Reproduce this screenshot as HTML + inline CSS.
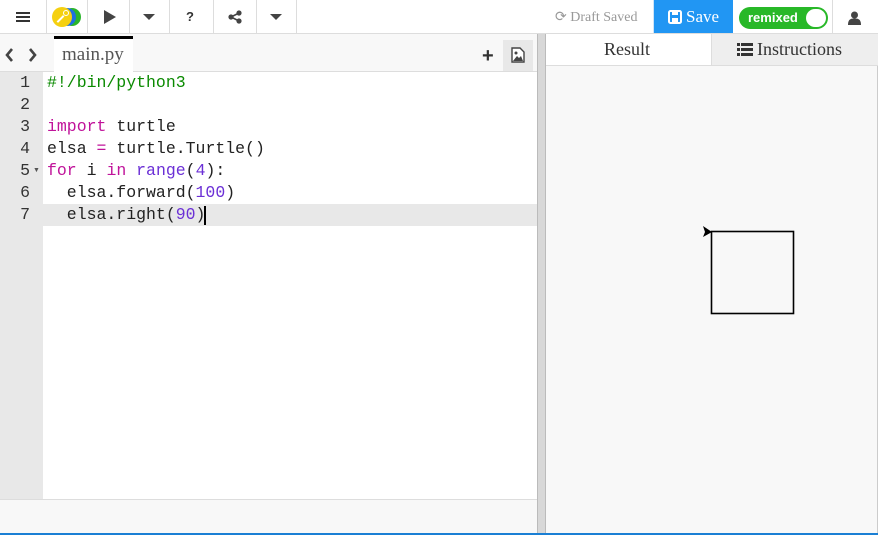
<!DOCTYPE html>
<html><head><style>
*{box-sizing:border-box;margin:0;padding:0}
body{width:878px;height:535px;overflow:hidden;background:#fff;font-family:"Liberation Sans",sans-serif;position:relative}
.a{position:absolute}
.tb{top:0;left:0;width:878px;height:34px;border-bottom:1px solid #ddd;background:#fff}
.sep{top:0;width:1px;height:33px;background:#ddd}
.code{font-family:"Liberation Mono","DejaVu Sans Mono",monospace;font-size:16.5px;line-height:22px;white-space:pre}
.ln{width:43px;text-align:right;padding-right:13px;color:#333}
.k{color:#c0139a}.n{color:#6b2fd6}.c{color:#0a8a00}
.serif{font-family:"Liberation Serif",serif}
</style></head><body>
<div class="a tb"></div>
<div class="a sep" style="left:46px"></div><div class="a sep" style="left:87px"></div><div class="a sep" style="left:129px"></div><div class="a sep" style="left:169px"></div><div class="a sep" style="left:213px"></div><div class="a sep" style="left:256px"></div><div class="a sep" style="left:296px"></div><div class="a sep" style="left:832px"></div>
<div class="a" style="left:16px;top:12px;width:14px;height:2px;background:#333;box-shadow:0 4px #333,0 8px #333"></div>
<div class="a" style="left:63px;top:8px;width:18px;height:18px;border-radius:50%;background:#2ab52a"></div>
<div class="a" style="left:58px;top:8px;width:18px;height:18px;border-radius:50%;background:#1e6fe0"></div>
<div class="a" style="left:52px;top:7px;width:20px;height:20px;border-radius:50%;background:#f5d010"></div>
<div class="a" style="left:56px;top:18px;width:9px;height:2px;background:#fff;transform:rotate(-45deg)"></div>
<div class="a" style="left:63px;top:10px;width:6px;height:6px;border-radius:50%;border:1.5px solid #fff"></div>
<svg class="a" style="left:103px;top:10px" width="14" height="14"><path d="M1 0L13 7L1 14Z" fill="#444"/></svg>
<svg class="a" style="left:143px;top:14px" width="14" height="8"><path d="M0 0H12L6 6Z" fill="#444"/></svg>
<div class="a" style="left:186px;top:9px;font-weight:bold;font-size:13px;color:#333">?</div>
<svg class="a" style="left:228px;top:10px" width="14" height="14"><circle cx="11" cy="3" r="2.6" fill="#444"/><circle cx="3" cy="7" r="2.6" fill="#444"/><circle cx="11" cy="11" r="2.6" fill="#444"/><path d="M11 3L3 7L11 11" stroke="#444" stroke-width="1.6" fill="none"/></svg>
<svg class="a" style="left:270px;top:14px" width="14" height="8"><path d="M0 0H12L6 6Z" fill="#444"/></svg>
<div class="a serif" style="left:555px;top:9px;font-size:14px;color:#999">⟳ Draft Saved</div>
<div class="a" style="left:653px;top:0;width:80px;height:33px;background:#2196f3;border-left:1px solid #cde4f8"></div>
<svg class="a" style="left:668px;top:10px" width="14" height="14"><rect x="1" y="1" width="12" height="12" rx="1.5" fill="none" stroke="#fff" stroke-width="2"/><rect x="4" y="1" width="6" height="4" fill="#fff"/><rect x="4" y="8" width="6" height="4" fill="#fff"/></svg>
<div class="a serif" style="left:686px;top:7px;font-size:17px;color:#fff">Save</div>
<div class="a" style="left:739px;top:7px;width:89px;height:22px;border-radius:11px;background:#28b828"></div>
<div class="a" style="left:748px;top:10px;font-size:13px;font-weight:bold;color:#fff">remixed</div>
<div class="a" style="left:806px;top:9px;width:20px;height:18px;border-radius:9px;background:#fff"></div>
<svg class="a" style="left:848px;top:11px" width="13" height="14"><circle cx="6.5" cy="4" r="3.5" fill="#444"/><path d="M0 14C0 8 3 7.5 6.5 7.5S13 8 13 14Z" fill="#444"/></svg>
<div class="a" style="left:0;top:34px;width:537px;height:38px;background:#f8f8f8;border-bottom:1px solid #ddd"></div>
<svg class="a" style="left:5px;top:48px" width="32" height="14"><path d="M7 1L2 7L7 13M25 1L30 7L25 13" stroke="#444" stroke-width="2.6" fill="none"/></svg>
<div class="a" style="left:54px;top:36px;width:79px;height:36px;background:#fff;border-top:3px solid #000"></div>
<div class="a serif" style="left:62px;top:44px;font-size:19px;color:#555">main.py</div>
<div class="a" style="left:482px;top:47px;font-size:20px;font-weight:bold;color:#333;line-height:18px">+</div>
<div class="a" style="left:503px;top:40px;width:30px;height:31px;background:#e8e8e8"></div>
<svg class="a" style="left:511px;top:47px" width="14" height="16"><path d="M1 1H9L13 5V15H1Z" fill="#fff" stroke="#444" stroke-width="1.4"/><circle cx="5" cy="6" r="1.5" fill="#444"/><path d="M2 14L6 9L8 11L10 9L12 14Z" fill="#444"/></svg>
<div class="a" style="left:0;top:72px;width:43px;height:427px;background:#e8e8e8"></div>
<div class="a" style="left:0;top:204px;width:537px;height:22px;background:#e8e8e8"></div>
<div class="a code" style="left:0;top:72px"><div class="ln">1</div><div class="ln">2</div><div class="ln">3</div><div class="ln">4</div><div class="ln">5</div><div class="ln">6</div><div class="ln">7</div></div>
<div class="a" style="left:33px;top:167px;font-size:7px;color:#555">▼</div>
<div class="a code" style="left:47px;top:72px;color:#222"><div class="c">#!/bin/python3</div><div> </div><div><span class="k">import</span> turtle</div><div>elsa <span class="k">=</span> turtle.Turtle()</div><div><span class="k">for</span> i <span class="k">in</span> <span class="n">range</span>(<span class="n">4</span>):</div><div>  elsa.forward(<span class="n">100</span>)</div><div>  elsa.right(<span class="n">90</span>)</div></div>
<div class="a" style="left:204px;top:206px;width:2px;height:19px;background:#000"></div>
<div class="a" style="left:0;top:499px;width:537px;height:34px;background:#f8f8f8;border-top:1px solid #ddd"></div>
<div class="a" style="left:537px;top:34px;width:9px;height:499px;background:#d8d8d8;border-left:1px solid #bbb;border-right:1px solid #bbb"></div>
<div class="a" style="left:546px;top:34px;width:332px;height:499px;background:#f8f8f8"></div>
<div class="a" style="left:546px;top:34px;width:166px;height:32px;background:#fff;border-bottom:1px solid #ddd;border-right:1px solid #ddd"></div>
<div class="a" style="left:712px;top:34px;width:166px;height:32px;background:#eee;border-bottom:1px solid #ddd"></div>
<div class="a serif" style="left:604px;top:39px;font-size:18px;color:#333">Result</div>
<svg class="a" style="left:737px;top:43px" width="16" height="13"><g fill="#333"><rect x="0" y="0" width="3" height="3"/><rect x="4" y="0" width="12" height="3"/><rect x="0" y="5" width="3" height="3"/><rect x="4" y="5" width="12" height="3"/><rect x="0" y="10" width="3" height="3"/><rect x="4" y="10" width="12" height="3"/></g></svg>
<div class="a serif" style="left:757px;top:39px;font-size:18px;color:#333">Instructions</div>
<div class="a" style="left:877px;top:66px;width:1px;height:467px;background:#ccc"></div>
<svg class="a" style="left:700px;top:222px" width="100" height="100"><rect x="11.5" y="9.5" width="82" height="82" fill="none" stroke="#000" stroke-width="1.6"/><path d="M3 4L12 10L3 15L5 10Z" fill="#000"/></svg>
<div class="a" style="left:0;top:533px;width:878px;height:2px;background:#1a7fd4"></div>
</body></html>
